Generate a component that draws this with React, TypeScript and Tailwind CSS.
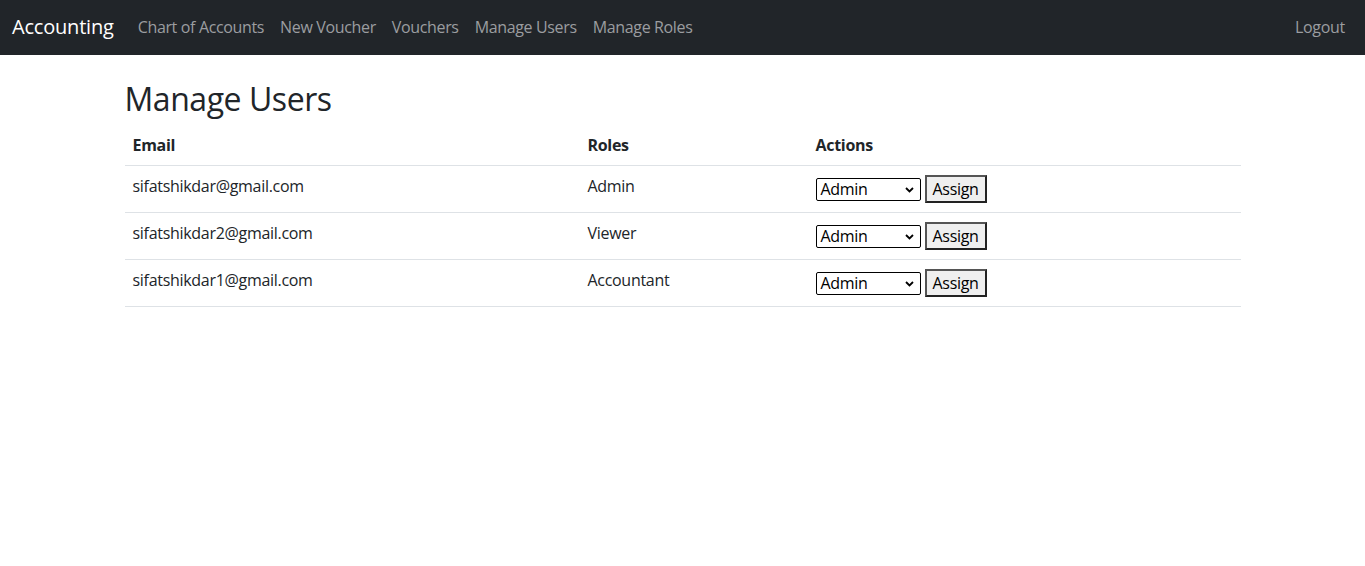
export default function App() {
  const users = [
    { email: "sifatshikdar@gmail.com", role: "Admin" },
    { email: "sifatshikdar2@gmail.com", role: "Viewer" },
    { email: "sifatshikdar1@gmail.com", role: "Accountant" },
  ];

  return (
    <div className="min-h-screen bg-white text-[#212529] [font-family:'Open_Sans',sans-serif]">
      <nav className="h-[55px] bg-[#212529] flex items-center px-3 pb-[2px]">
        <span className="text-white text-[20px] mr-4 tracking-[-0.2px]">Accounting</span>
        <ul className="flex text-[16px] text-[#9b9da0] tracking-[-0.35px]">
          <li className="px-2">Chart of Accounts</li>
          <li className="px-2">New Voucher</li>
          <li className="px-2">Vouchers</li>
          <li className="px-2">Manage Users</li>
          <li className="px-2">Manage Roles</li>
        </ul>
        <span className="ml-auto px-2 text-[16px] text-[#9b9da0] tracking-[-0.3px]">Logout</span>
      </nav>

      <div className="w-[1140px] mx-auto px-3 pt-[25px]">
        <h2 className="text-[32px] leading-[38px] mb-[7px] font-medium tracking-[-0.45px]">Manage Users</h2>
        <table className="w-full text-[16px] tracking-[-0.3px]">
          <thead>
            <tr className="border-b border-[#dee2e6] text-left">
              <th className="w-[455px] px-2 py-2 leading-6 font-bold">Email</th>
              <th className="w-[228px] px-2 py-2 leading-6 font-bold">Roles</th>
              <th className="px-2 py-2 leading-6 font-bold">Actions</th>
            </tr>
          </thead>
          <tbody>
            {users.map((u) => (
              <tr key={u.email} className="border-b border-[#dee2e6] align-top">
                <td className="px-2 pt-2 pb-2 leading-6">{u.email}</td>
                <td className="px-2 pt-2 pb-2 leading-6">{u.role}</td>
                <td className="px-2 pt-[9px] pb-[9px]">
                  <div className="flex items-center gap-1 h-[28px]">
                    <div className="relative w-[105px] h-[23px] border border-black rounded-[2px] bg-white flex items-center pl-1 text-[16px] text-black">
                      Admin
                      <svg className="absolute right-[6px] top-[8px]" width="9" height="6" viewBox="0 0 9 6">
                        <path d="M1 1l3.5 3.5L8 1" stroke="black" strokeWidth="1.8" fill="none" />
                      </svg>
                    </div>
                    <button className="h-[28px] px-[6px] bg-[#efefef] text-black text-[16px] border-2 border-t-[#555] border-l-[#555] border-r-[#222] border-b-[#222]">
                      Assign
                    </button>
                  </div>
                </td>
              </tr>
            ))}
          </tbody>
        </table>
      </div>
    </div>
  );
}
